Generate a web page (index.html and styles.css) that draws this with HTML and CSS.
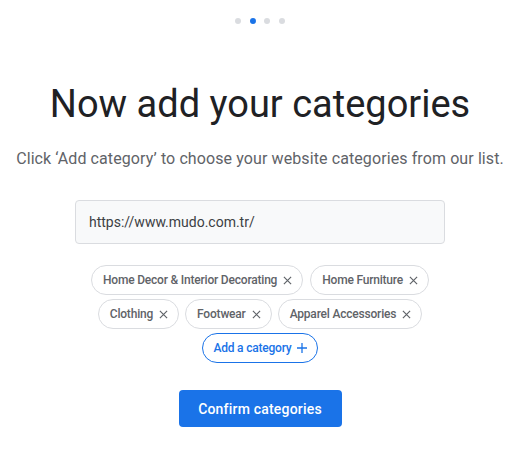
FILE: index.html
```html
<!DOCTYPE html>
<html>
<head>
<meta charset="utf-8">
<link rel="stylesheet" href="styles.css">
</head>
<body>
<main class="page">
  <div class="dots">
    <span class="dot"></span>
    <span class="dot active"></span>
    <span class="dot"></span>
    <span class="dot"></span>
  </div>
  <h1 class="title">Now add your categories</h1>
  <p class="subtitle">Click ‘Add category’ to choose your website categories from our list.</p>
  <div class="url-box">https://www.mudo.com.tr/</div>
  <div class="chips first">
    <span class="chip">Home Decor &amp; Interior Decorating <svg class="x" viewBox="0 0 10 10"><path d="M1 1L9 9M9 1L1 9"/></svg></span>
    <span class="chip">Home Furniture <svg class="x" viewBox="0 0 10 10"><path d="M1 1L9 9M9 1L1 9"/></svg></span>
  </div>
  <div class="chips">
    <span class="chip">Clothing <svg class="x" viewBox="0 0 10 10"><path d="M1 1L9 9M9 1L1 9"/></svg></span>
    <span class="chip">Footwear <svg class="x" viewBox="0 0 10 10"><path d="M1 1L9 9M9 1L1 9"/></svg></span>
    <span class="chip">Apparel Accessories <svg class="x" viewBox="0 0 10 10"><path d="M1 1L9 9M9 1L1 9"/></svg></span>
  </div>
  <div class="chips">
    <span class="chip add">Add a category <svg class="plus" viewBox="0 0 10 10"><path d="M5 0V10M0 5H10"/></svg></span>
  </div>
  <button class="confirm">Confirm categories</button>
</main>
</body>
</html>
```

FILE: styles.css
```css
html, body {
  margin: 0;
  padding: 0;
  background: #ffffff;
}
.page {
  box-sizing: border-box;
  width: 520px;
  display: flex;
  flex-direction: column;
  align-items: center;
  font-family: Roboto, "Liberation Sans", sans-serif;
  color: #202124;
}
.dots {
  display: flex;
  gap: 8.5px;
  margin-top: 18px;
  height: 6px;
}
.dot {
  width: 6px;
  height: 6px;
  border-radius: 50%;
  background: #dadce0;
}
.dot.active {
  background: #1a73e8;
}
.title {
  margin: 58px 0 0;
  font-weight: 400;
  font-size: 38px;
  line-height: 44px;
  color: #202124;
}
.subtitle {
  margin: 22px 0 0;
  font-size: 16px;
  line-height: 22px;
  color: #5f6368;
  letter-spacing: 0.1px;
}
.url-box {
  box-sizing: border-box;
  margin-top: 30px;
  width: 370px;
  height: 44px;
  background: #f8f9fa;
  border: 1px solid #dadce0;
  border-radius: 4px;
  padding: 0 13px;
  display: flex;
  align-items: center;
  font-size: 14px;
  color: #3c4043;
}
.chips {
  display: flex;
  justify-content: center;
  gap: 6px;
  margin-top: 4px;
}
.chips.first {
  margin-top: 21px;
  gap: 7px;
}
.chip {
  box-sizing: border-box;
  height: 30px;
  padding: 0 10px 0 11px;
  border: 1px solid #dadce0;
  border-radius: 15px;
  display: inline-flex;
  align-items: center;
  gap: 6px;
  font-size: 12px;
  font-weight: 500;
  letter-spacing: -0.2px;
  color: #5f6368;
}
.x {
  width: 9px;
  height: 9px;
  stroke: #5f6368;
  stroke-width: 1.3;
  fill: none;
}
.chip.add {
  border-color: #1a73e8;
  color: #1a73e8;
  padding: 0 10px 0 10px;
  gap: 5px;
}
.plus {
  width: 10px;
  height: 10px;
  stroke: #1a73e8;
  stroke-width: 1.3;
  fill: none;
}
.confirm {
  margin-top: 27px;
  width: 163px;
  height: 37px;
  border: none;
  border-radius: 4px;
  background: #1a73e8;
  color: #ffffff;
  font-family: Roboto, "Liberation Sans", sans-serif;
  font-size: 14px;
  font-weight: 500;
  letter-spacing: 0.2px;
}
```
